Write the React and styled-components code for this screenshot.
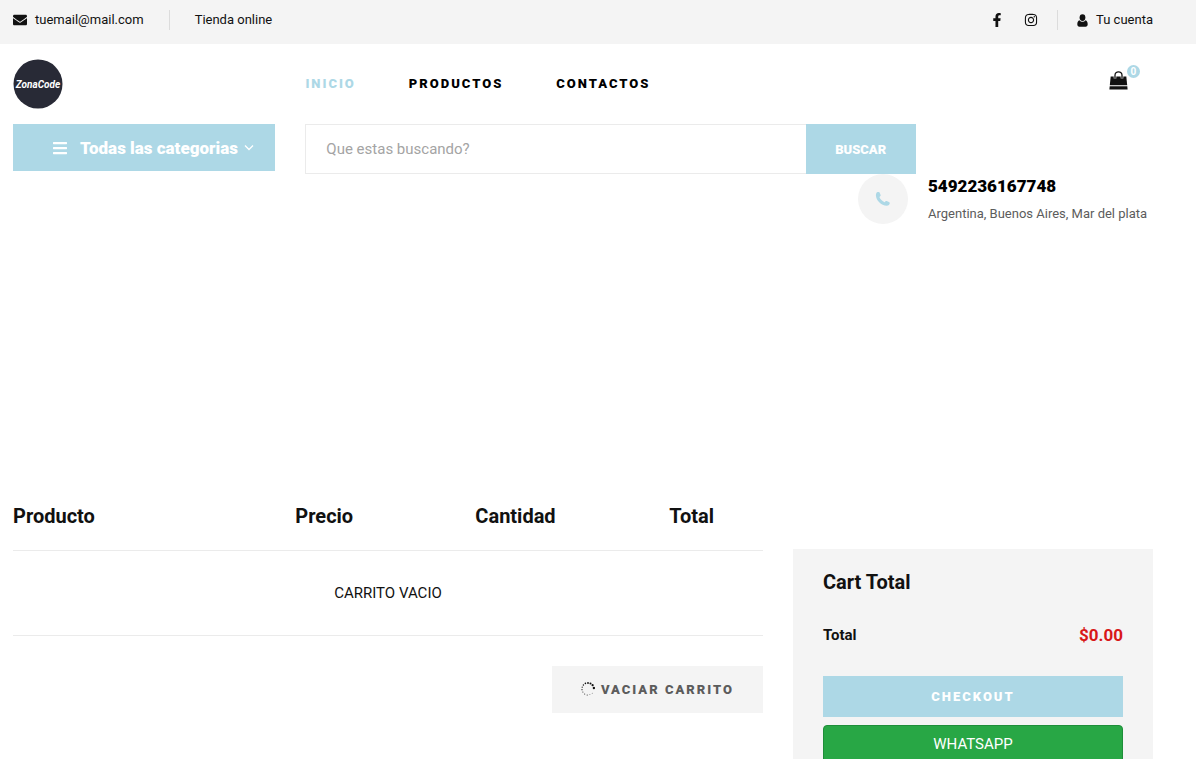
import React from 'react'
import styled, { createGlobalStyle, ThemeProvider } from 'styled-components'
import { FaEnvelope, FaFacebookF, FaInstagram, FaBars } from 'react-icons/fa'

const theme = {
  brand: '#add8e6',
  fg: '#111111',
  black: '#000000',
  muted: '#5c5c5c',
  panel: '#f4f4f4',
  line: '#ebebeb',
  price: '#d81818',
  success: '#28a745',
  successDark: '#1e8e39',
}

const GlobalStyle = createGlobalStyle`
  *, *::before, *::after {
    box-sizing: border-box;
  }
  body {
    margin: 0;
    background: #ffffff;
    color: #111111;
    font-family: Roboto, "Liberation Sans", sans-serif;
    font-size: 13px;
    line-height: 24px;
  }
  h4, h5, p, ul {
    margin: 0;
    padding: 0;
  }
  a {
    color: inherit;
    text-decoration: none;
  }
  button, input {
    font-family: inherit;
    margin: 0;
  }
`

const Container = styled.div`
  padding: 0 43px 0 13px;
`

const TopBar = styled.div`
  background: ${props => props.theme.panel};
`

const TopBarInner = styled(Container)`
  display: flex;
  justify-content: space-between;
  align-items: center;
  height: 44px;
  padding-bottom: 4px;
`

const TopGroup = styled.div`
  display: flex;
  align-items: center;
`

const TopItem = styled.a`
  display: flex;
  align-items: center;
  gap: 8px;
  color: ${props => props.theme.fg};
`

const Divider = styled.span`
  width: 1px;
  height: 20px;
  margin: 0 ${props => props.space};
  background: #dcdcdc;
`

const Social = styled.div`
  display: flex;
  align-items: center;
  gap: 20px;
`

const Columns = styled.div`
  display: grid;
  grid-template-columns: ${props => props.cols};
  column-gap: 30px;
`

const NavRow = styled(Columns)`
  height: 80px;
  align-items: center;
`

const LogoLink = styled.a`
  display: block;
  width: 50px;
  height: 50px;
`

const Menu = styled.ul`
  display: flex;
  gap: 53px;
  list-style: none;
`

const MenuLink = styled.a`
  font-size: 13px;
  font-weight: 900;
  letter-spacing: 2px;
  text-transform: uppercase;
  color: ${props => (props.$active ? props.theme.brand : props.theme.black)};
`

const CartLink = styled.a`
  position: relative;
  justify-self: end;
  display: block;
  margin: 0 25px 8px 0;
  line-height: 0;
  color: ${props => props.theme.fg};
`

const Badge = styled.span`
  position: absolute;
  top: -6px;
  right: -12px;
  width: 13px;
  height: 13px;
  border-radius: 50%;
  background: ${props => props.theme.brand};
  color: #ffffff;
  font-size: 10px;
  font-weight: 700;
  line-height: 13px;
  text-align: center;
`

const Categories = styled.button`
  display: flex;
  align-items: center;
  width: 100%;
  height: 47px;
  padding: 0 21px 0 39px;
  border: none;
  background: ${props => props.theme.brand};
  color: #ffffff;
  font-size: 17px;
  font-weight: 900;
  white-space: nowrap;
  cursor: pointer;
`

const CategoriesLabel = styled.span`
  flex: 1;
  padding-left: 12px;
  text-align: left;
`

const Search = styled.form`
  display: flex;
  width: 72%;
  height: 50px;
  border: 1px solid ${props => props.theme.line};
  border-right: none;
`

const SearchInput = styled.input`
  flex: 1;
  min-width: 0;
  padding: 0 20px;
  border: none;
  outline: none;
  font-size: 15px;
  color: ${props => props.theme.fg};
  &::placeholder {
    color: #a4a4a4;
  }
`

const SearchButton = styled.button`
  width: 110px;
  margin: -1px 0;
  border: none;
  background: ${props => props.theme.brand};
  color: #ffffff;
  font-size: 13px;
  font-weight: 900;
  text-transform: uppercase;
  cursor: pointer;
`

const Phone = styled.div`
  display: flex;
  justify-content: flex-end;
  gap: 20px;
`

const PhoneIcon = styled.div`
  display: flex;
  align-items: center;
  justify-content: center;
  width: 50px;
  height: 50px;
  border-radius: 50%;
  background: ${props => props.theme.panel};
`

const PhoneInfo = styled.div`
  min-width: 225px;
`

const PhoneNumber = styled.h5`
  margin-bottom: 6px;
  font-size: 17px;
  font-weight: 900;
  line-height: 24px;
  color: ${props => props.theme.black};
`

const PhoneText = styled.p`
  font-size: 13px;
  line-height: 20px;
  color: ${props => props.theme.muted};
`

const Main = styled(Container)`
  padding-top: 270px;
  padding-bottom: 80px;
`

const CartTable = styled.table`
  width: 100%;
  table-layout: fixed;
  border-collapse: collapse;
  text-align: center;
  th {
    height: 56px;
    padding: 0 0 12px;
    border-bottom: 1px solid ${props => props.theme.line};
    font-size: 20px;
    font-weight: 700;
    color: ${props => props.theme.fg};
  }
  th:first-child {
    text-align: left;
  }
  td {
    height: 85px;
    padding: 0;
    border-bottom: 1px solid ${props => props.theme.line};
    font-size: 15px;
  }
`

const Actions = styled.div`
  display: flex;
  justify-content: flex-end;
  padding-top: 30px;
`

const ClearButton = styled.button`
  display: flex;
  align-items: center;
  gap: 6px;
  height: 47px;
  padding: 0 29px;
  border: none;
  background: ${props => props.theme.panel};
  color: ${props => props.theme.muted};
  font-size: 13px;
  font-weight: 900;
  letter-spacing: 2px;
  text-transform: uppercase;
  cursor: pointer;
`

const Summary = styled.div`
  margin-top: 55px;
  padding: 20px 30px 40px;
  background: ${props => props.theme.panel};
`

const SummaryTitle = styled.h5`
  margin-bottom: 28px;
  font-size: 20px;
  font-weight: 700;
  line-height: 26px;
`

const SummaryRow = styled.div`
  display: flex;
  justify-content: space-between;
  margin-bottom: 29px;
  font-size: 15px;
  font-weight: 700;
  color: ${props => props.theme.fg};
`

const Price = styled.span`
  font-size: 17px;
  color: ${props => props.theme.price};
`

const Checkout = styled.button`
  display: block;
  width: 100%;
  height: 41px;
  margin-bottom: 8px;
  border: none;
  background: ${props => props.theme.brand};
  color: #ffffff;
  font-size: 13px;
  font-weight: 900;
  letter-spacing: 2px;
  text-transform: uppercase;
  cursor: pointer;
`

const Whatsapp = styled.a`
  display: block;
  padding: 6px 12px;
  border: 1px solid ${props => props.theme.successDark};
  border-radius: 4px;
  background: ${props => props.theme.success};
  color: #ffffff;
  font-size: 15px;
  text-align: center;
`

const Logo = () => (
  <svg width="50" height="50" viewBox="0 0 50 50">
    <circle cx="25" cy="25" r="24.5" fill="#282a36" />
    <text
      x="25"
      y="28.5"
      fill="#ffffff"
      fontFamily="Roboto, sans-serif"
      fontSize="10"
      fontStyle="italic"
      fontWeight="700"
      textAnchor="middle"
    >
      ZonaCode
    </text>
  </svg>
)

const ChevronDown = () => (
  <svg width="10" height="10" viewBox="0 0 10 10">
    <path d="M1 2.5l4 4 4-4" fill="none" stroke="#ffffff" strokeWidth="1.3" />
  </svg>
)

const User = () => (
  <svg width="11" height="13" viewBox="0 0 11 13">
    <ellipse cx="5.5" cy="3.6" rx="2.9" ry="3.4" fill="currentColor" />
    <path
      d="M2.5 6.2C1 6.6.3 8.2.3 10.2c0 1.6.8 2.5 2.1 2.5h6.2c1.3 0 2.1-.9 2.1-2.5 0-2-.7-3.6-2.2-4C7.700 7.200 6.600 7.700 5.500 7.700S3.300 7.200 2.500 6.200z"
      fill="currentColor"
    />
  </svg>
)

const Bag = () => (
  <svg width="19" height="19" viewBox="0 0 19 19">
    <path d="M1.7 5.500h15.600l.9 8.800H.8z" fill="currentColor" />
    <path d="M.7 15.200h17.600l.3 3.300H.4z" fill="currentColor" />
    <path
      d="M6 7.500V4.300a3.500 3.500 0 0 1 7 0v3.200"
      fill="none"
      stroke="#ffffff"
      strokeWidth="2.6"
    />
    <path
      d="M6 7.500V4.300a3.500 3.500 0 0 1 7 0v3.200"
      fill="none"
      stroke="currentColor"
      strokeWidth="1.3"
    />
  </svg>
)

const Handset = () => (
  <svg width="16" height="16" viewBox="0 0 16 16">
    <path
      d="M1.2 2.4C1.6 1.2 2.8.8 3.8 1c.5.1.8.5 1 1l.8 2c.2.5 0 1-.4 1.3l-.8.7c.9 2.3 2.8 4.2 5.3 5.2l.8-.9c.3-.4.8-.5 1.2-.3l2.2.9c.6.2.9.7.9 1.2-.1 1.6-1.3 2.7-3 2.7C6.2 14.8.9 9 .9 4.2c0-.6.1-1.2.3-1.8z"
      fill="#add8e6"
    />
  </svg>
)

// x, y, radius: the dots grow towards the upper right
const DOTS = [
  [7, 1, 0.9],
  [9.5, 1.6, 1],
  [11.6, 3.2, 1.1],
  [12.9, 6, 1.2],
  [4.4, 1.4, 0.8],
  [2.4, 3, 0.7],
  [1.2, 5.2, 0.6],
  [1, 7.7, 0.6],
  [1.9, 10, 0.5],
  [3.7, 12, 0.5],
  [6.2, 13, 0.5],
  [8.9, 12.7, 0.4],
  [11.2, 11.2, 0.4],
]

const Loading = () => (
  <svg width="14" height="14" viewBox="0 0 14 14">
    {DOTS.map(([x, y, r]) => (
      <circle key={`${x}-${y}`} cx={x} cy={y} r={r} fill="#111111" />
    ))}
  </svg>
)

const Header = () => (
  <header>
    <TopBar>
      <TopBarInner>
        <TopGroup>
          <TopItem href="mailto:tuemail@mail.com">
            <FaEnvelope size={14} />
            tuemail@mail.com
          </TopItem>
          <Divider space="25px" />
          <span>Tienda online</span>
        </TopGroup>
        <TopGroup>
          <Social>
            <TopItem href="#" aria-label="Facebook">
              <FaFacebookF size={14} />
            </TopItem>
            <TopItem href="#" aria-label="Instagram">
              <FaInstagram size={14} />
            </TopItem>
          </Social>
          <Divider space="19px" />
          <TopItem href="#">
            <User />
            Tu cuenta
          </TopItem>
        </TopGroup>
      </TopBarInner>
    </TopBar>
    <Container>
      <NavRow cols="26fr 55fr 26fr">
        <LogoLink href="#" aria-label="ZonaCode">
          <Logo />
        </LogoLink>
        <nav>
          <Menu>
            <li>
              <MenuLink href="#" $active>
                Inicio
              </MenuLink>
            </li>
            <li>
              <MenuLink href="#">Productos</MenuLink>
            </li>
            <li>
              <MenuLink href="#">Contactos</MenuLink>
            </li>
          </Menu>
        </nav>
        <CartLink href="#" aria-label="Carrito">
          <Bag />
          <Badge>0</Badge>
        </CartLink>
      </NavRow>
    </Container>
  </header>
)

const Hero = () => (
  <Container>
    <Columns cols="13fr 42fr">
      <div>
        <Categories type="button">
          <FaBars size={16} />
          <CategoriesLabel>Todas las categorias</CategoriesLabel>
          <ChevronDown />
        </Categories>
      </div>
      <div>
        <Search>
          <SearchInput
            type="text"
            placeholder="Que estas buscando?"
            aria-label="Que estas buscando?"
          />
          <SearchButton type="submit">Buscar</SearchButton>
        </Search>
        <Phone>
          <PhoneIcon>
            <Handset />
          </PhoneIcon>
          <PhoneInfo>
            <PhoneNumber>5492236167748</PhoneNumber>
            <PhoneText>Argentina, Buenos Aires, Mar del plata</PhoneText>
          </PhoneInfo>
        </Phone>
      </div>
    </Columns>
  </Container>
)

const Cart = () => (
  <Main as="main">
    <Columns cols="25fr 12fr">
      <section>
        <CartTable>
          <colgroup>
            <col width="31%" />
            <col width="21%" />
            <col width="30%" />
            <col width="17%" />
            <col width="1%" />
          </colgroup>
          <thead>
            <tr>
              <th>Producto</th>
              <th>Precio</th>
              <th>Cantidad</th>
              <th>Total</th>
              <th />
            </tr>
          </thead>
          <tbody>
            <tr>
              <td colSpan={5}>CARRITO VACIO</td>
            </tr>
          </tbody>
        </CartTable>
        <Actions>
          <ClearButton type="button">
            <Loading />
            Vaciar carrito
          </ClearButton>
        </Actions>
      </section>
      <Summary>
        <SummaryTitle>Cart Total</SummaryTitle>
        <SummaryRow>
          <span>Total</span>
          <Price>$0.00</Price>
        </SummaryRow>
        <Checkout type="button">Checkout</Checkout>
        <Whatsapp href="#">WHATSAPP</Whatsapp>
      </Summary>
    </Columns>
  </Main>
)

const App = () => (
  <ThemeProvider theme={theme}>
    <GlobalStyle />
    <Header />
    <Hero />
    <Cart />
  </ThemeProvider>
)

export default App
